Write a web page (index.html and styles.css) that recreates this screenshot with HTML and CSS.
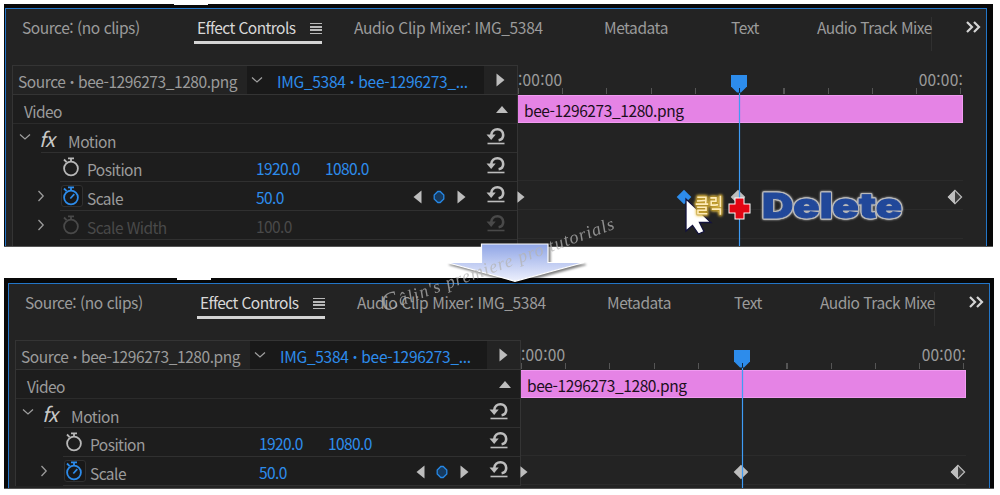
FILE: index.html
```html
<!DOCTYPE html>
<html lang="ko">
<head>
  <meta charset="UTF-8" />
  <title>Effect Controls - Delete Keyframe</title>
  <link rel="stylesheet" href="styles.css">
</head>
<body>
  <svg class="defs" width="0" height="0">
    <symbol id="watch" viewBox="0 0 18 20">
      <circle cx="9" cy="11.5" r="6.9" fill="none" stroke="currentColor" stroke-width="1.8"/>
      <path d="M6 1.3h6M9 1.5v3M2 2.5l2.6 2.6" fill="none" stroke="currentColor" stroke-width="1.8"/>
    </symbol>
    <symbol id="reset" viewBox="0 0 20 18">
      <path d="M5.2 8.3C5.7 0.4 17.2 0.2 17.2 8c0 2.8-1.6 4.7-4.6 5.2" fill="none" stroke="currentColor" stroke-width="2.6"/>
      <path d="M0.5 7.6h9.2L5.2 13z" fill="currentColor"/>
      <path d="M1.5 16.5h17" stroke="currentColor" stroke-width="1.6"/>
    </symbol>
    <symbol id="down" viewBox="0 0 12 8"><path d="M1 1.5l5 4.5 5-4.5" fill="none" stroke="currentColor" stroke-width="1.2"/></symbol>
    <symbol id="right" viewBox="0 0 8 12"><path d="M1.5 1l4.7 5-4.7 5" fill="none" stroke="currentColor" stroke-width="1.3"/></symbol>
    <symbol id="play" viewBox="0 0 9 14"><path d="M0.5 0.5v13L8.5 7z" fill="currentColor"/></symbol>
    <symbol id="more" viewBox="0 0 15 12"><path d="M1 1l5 5-5 5M8 1l5 5-5 5" fill="none" stroke="currentColor" stroke-width="2.2"/></symbol>
    <symbol id="hex" viewBox="0 0 12 14"><path d="M4.8 1.5h2.4L10.8 5v4L7.2 12.5H4.8L1.2 9V5z" fill="#173a5e" stroke="#2688e6" stroke-width="1.3"/></symbol>
    <symbol id="marker" viewBox="0 0 16 18"><path d="M0 0h16v11.5L10 17.5H6L0 11.5z" fill="#2d8ceb"/><path d="M8.5 13v5" stroke="#102a44" stroke-width="1"/></symbol>
    <symbol id="key" viewBox="0 0 16 16"><path d="M8 0.7L15.3 8 8 15.3 0.7 8z" fill="currentColor"/></symbol>
    <symbol id="key-end" viewBox="0 0 16 16"><path d="M8 1.4L14.6 8 8 14.6 1.4 8z" fill="#3d3d3d" stroke="#bdbdbd" stroke-width="1.2"/><path d="M8 0.8V15.2L0.8 8z" fill="#bdbdbd"/></symbol>
  </svg>

  <div class="page">
    <section class="shot first">
      <div class="notch"></div>
      <div class="panel">
        <div class="tabs">
          <span class="tab t-source">Source: (no clips)</span>
          <span class="tab t-effect active"><span class="label">Effect Controls</span><i class="menu"></i></span>
          <span class="tab t-mixer">Audio Clip Mixer: IMG_5384</span>
          <span class="tab t-meta">Metadata</span>
          <span class="tab t-text">Text</span>
          <span class="tab t-track">Audio Track Mixe</span>
          <svg class="more"><use href="#more"/></svg>
        </div>
        <div class="main">
          <div class="effects">
            <div class="clip-row">
              <span class="source">Source <b>·</b> bee-1296273_1280.png</span>
              <span class="sequence"><svg class="down"><use href="#down"/></svg><span class="seq-name">IMG_5384 <b>·</b> bee-1296273_...</span></span>
              <span class="go"><svg class="play"><use href="#play"/></svg></span>
            </div>
            <div class="video-row"><span>Video</span><i class="up"></i></div>
            <div class="row motion">
              <svg class="down"><use href="#down"/></svg><span class="fx">fx</span><span class="name">Motion</span>
              <svg class="reset"><use href="#reset"/></svg>
            </div>
            <div class="row">
              <span class="twirl"></span>
              <span class="watch"><svg><use href="#watch"/></svg></span>
              <span class="name">Position</span><span class="value">1920.0</span><span class="value">1080.0</span>
              <svg class="reset"><use href="#reset"/></svg>
            </div>
            <div class="row">
              <span class="twirl"><svg><use href="#right"/></svg></span>
              <span class="watch on"><svg><use href="#watch"/><path d="M8.3 12.5l4-4.3" stroke="currentColor" stroke-width="1.7"/></svg></span>
              <span class="name">Scale</span><span class="value">50.0</span>
              <span class="keys"><svg class="play prev"><use href="#play"/></svg><svg class="hex"><use href="#hex"/></svg><svg class="play"><use href="#play"/></svg></span>
              <svg class="reset"><use href="#reset"/></svg>
            </div>
            <div class="row disabled">
              <span class="twirl"><svg><use href="#right"/></svg></span>
              <span class="watch"><svg><use href="#watch"/></svg></span>
              <span class="name">Scale Width</span><span class="value">100.0</span>
              <svg class="reset"><use href="#reset"/></svg>
            </div>
            <div class="row"></div>
          </div>
          <div class="timeline">
            <div class="ruler"><span>:00:00</span><span>00:00:</span></div>
            <div class="clip">bee-1296273_1280.png</div>
            <div class="track tall"></div>
            <div class="track"></div>
            <div class="track"></div>
            <svg class="marker"><use href="#marker"/></svg>
            <svg class="key start"><use href="#play"/></svg>
            <svg class="key selected"><use href="#key"/></svg>
            <svg class="key middle"><use href="#key"/></svg>
            <svg class="key end"><use href="#key-end"/></svg>
            <i class="playline"></i>
          </div>
        </div>
      </div>
    </section>

    <section class="shot second">
      <div class="notch"></div>
      <div class="panel">
        <div class="tabs">
          <span class="tab t-source">Source: (no clips)</span>
          <span class="tab t-effect active"><span class="label">Effect Controls</span><i class="menu"></i></span>
          <span class="tab t-mixer">Audio Clip Mixer: IMG_5384</span>
          <span class="tab t-meta">Metadata</span>
          <span class="tab t-text">Text</span>
          <span class="tab t-track">Audio Track Mixe</span>
          <svg class="more"><use href="#more"/></svg>
        </div>
        <div class="main">
          <div class="effects">
            <div class="clip-row">
              <span class="source">Source <b>·</b> bee-1296273_1280.png</span>
              <span class="sequence"><svg class="down"><use href="#down"/></svg><span class="seq-name">IMG_5384 <b>·</b> bee-1296273_...</span></span>
              <span class="go"><svg class="play"><use href="#play"/></svg></span>
            </div>
            <div class="video-row"><span>Video</span><i class="up"></i></div>
            <div class="row motion">
              <svg class="down"><use href="#down"/></svg><span class="fx">fx</span><span class="name">Motion</span>
              <svg class="reset"><use href="#reset"/></svg>
            </div>
            <div class="row">
              <span class="twirl"></span>
              <span class="watch"><svg><use href="#watch"/></svg></span>
              <span class="name">Position</span><span class="value">1920.0</span><span class="value">1080.0</span>
              <svg class="reset"><use href="#reset"/></svg>
            </div>
            <div class="row">
              <span class="twirl"><svg><use href="#right"/></svg></span>
              <span class="watch on"><svg><use href="#watch"/><path d="M8.3 12.5l4-4.3" stroke="currentColor" stroke-width="1.7"/></svg></span>
              <span class="name">Scale</span><span class="value">50.0</span>
              <span class="keys"><svg class="play prev"><use href="#play"/></svg><svg class="hex"><use href="#hex"/></svg><svg class="play"><use href="#play"/></svg></span>
              <svg class="reset"><use href="#reset"/></svg>
            </div>
          </div>
          <div class="timeline">
            <div class="ruler"><span>:00:00</span><span>00:00:</span></div>
            <div class="clip">bee-1296273_1280.png</div>
            <div class="track tall"></div>
            <div class="track"></div>
            <svg class="marker"><use href="#marker"/></svg>
            <svg class="key start"><use href="#play"/></svg>
            <svg class="key middle"><use href="#key"/></svg>
            <svg class="key end"><use href="#key-end"/></svg>
            <i class="playline"></i>
          </div>
        </div>
      </div>
    </section>

    <!-- annotations over both panels -->
    <svg class="notes" viewBox="0 0 1000 495">
      <defs>
        <linearGradient id="arrow-fill" x1="0" y1="0" x2="0" y2="1">
          <stop offset="0" stop-color="#8fa5e6"/>
          <stop offset="1" stop-color="#edf0fd"/>
        </linearGradient>
      </defs>
      <path class="arrow" d="M481.5 244H548V262.5H584L515 281.3 447 262.5H481.5z"/>
      <text class="watermark" transform="translate(384 312) rotate(-19.8)" textLength="246"><tspan class="initial">C</tspan>âlin's premiere pro tutorials</text>
      <path class="cursor" d="M686 199V231L692.5 225.5 698.5 234 704 231.5 699.5 222.5H711z"/>
      <text class="click" x="695" y="213" textLength="28" lengthAdjust="spacingAndGlyphs">클릭</text>
      <path class="plus" d="M735.5 198.5h8v6h6v8h-6v6h-8v-6h-6v-8h6z"/>
      <text class="delete" x="762" y="218" textLength="140" lengthAdjust="spacingAndGlyphs">Delete</text>
    </svg>
  </div>
</body>
</html>
```
FILE: styles.css
```css
body {
  margin: 0;
  background: #fff;
  color: #9b9b9b;
  font-family: "Noto Sans CJK KR", "Noto Sans", sans-serif;
  font-size: 15.5px;
  letter-spacing: -0.45px;
  line-height: 20px;
}

.defs {
  position: absolute;
}

.page {
  display: flow-root;
  position: relative;
  width: 1000px;
  height: 495px;
  overflow: hidden;
}

.page, .page * {
  box-sizing: border-box;
}

svg {
  flex: none;
  display: block;
}

.shot {
  position: relative;
  width: 989px;
  height: 243px;
  margin-left: 4px;
  padding: 4px 0 0 1px;
  background: #080808;
  border-bottom: 1px solid #555;
  overflow: hidden;
}

.first {
  margin-top: 4px;
}

.second {
  width: 990px;
  height: 211px;
  margin-top: 31px;
  padding: 5px 0 0 4px;
}

.notch {
  position: absolute;
  top: 0;
  left: 170px;
  width: 34px;
  height: 1px;
  background: #fff;
}

.second .notch {
  left: 173px;
  height: 2px;
}

.panel {
  width: 982px;
  height: 260px;
  border: 1px solid #2376c8;
  background: #232323;
}

/* tabs */
.tabs {
  display: flex;
  height: 56px;
  padding: 8px 0 0 16px;
  white-space: nowrap;
}

.tab {
  flex: none;
  height: 27px;
}

.t-source { width: 172px; }
.t-effect { width: 128px; margin-right: 32px; letter-spacing: -0.57px; }
.t-mixer { width: 250px; letter-spacing: -0.33px; }
.t-meta { width: 127px; }
.t-text { width: 86px; }

.t-track {
  width: 115px;
  height: 34px;
  letter-spacing: -0.5px;
  border-right: 1px solid #303030;
}

.active {
  display: flex;
  justify-content: space-between;
  padding-left: 3px;
  color: #d8d8d8;
  border-bottom: 3px solid #d4d4d4;
}

.menu {
  width: 12px;
  height: 11px;
  margin: 6px 0 0;
  background: repeating-linear-gradient(#b8b8b8 0 1.4px, transparent 1.4px 3.2px);
}

.more {
  width: 15px;
  height: 12px;
  margin: 4px 0 0 34px;
  color: #d4d4d4;
}

/* effect list */
.main {
  display: flex;
  padding-left: 6px;
}

.effects {
  width: 506px;
  border: 1px solid #343434;
  border-bottom: 0;
  background: #1d1d1d;
}

.clip-row {
  display: flex;
  height: 29px;
  border-bottom: 1px solid #343434;
  letter-spacing: -0.3px;
  white-space: nowrap;
}

.source {
  width: 234px;
  padding: 5px 0 0 5px;
  letter-spacing: -0.42px;
  background: #232323;
}

.sequence {
  display: flex;
  width: 237px;
  padding: 5px 0 0 4px;
  background: #191919;
  color: #2d8ceb;
}

.down {
  width: 12px;
  height: 8px;
  color: #a0a0a0;
}

.sequence .down {
  margin: 5px 14px 0 0;
}

.go {
  flex: 1;
  padding: 7px 0 0 12px;
  background: #232323;
  color: #bdbdbd;
}

.play {
  width: 9px;
  height: 14px;
}

.video-row {
  display: flex;
  justify-content: space-between;
  height: 29px;
  padding: 6px 9px 0 11px;
  border-bottom: 1px solid #2b2b2b;
  letter-spacing: -0.6px;
}

.up {
  width: 0;
  height: 0;
  margin-top: 5px;
  border: 6px solid transparent;
  border-top: 0;
  border-bottom: 7px solid #bdbdbd;
}

.row {
  display: flex;
  height: 29px;
  padding-left: 24px;
  background: linear-gradient(#303030, #303030) 47px 28px / 100% 1px no-repeat;
}

.motion {
  padding-left: 6px;
  background-position: 28px 28px;
}

.motion .down {
  margin-top: 9px;
}

.fx {
  width: 29px;
  margin: 5px 0 0 8px;
  color: #c8c8c8;
  font-size: 20px;
  font-style: italic;
}

.name {
  padding-top: 7px;
}

.row:not(.motion) .name {
  width: 169px;
  padding-top: 6px;
  letter-spacing: -0.55px;
}

.twirl {
  width: 24px;
  padding-top: 8px;
}

.twirl svg {
  width: 8px;
  height: 12px;
}

.watch {
  width: 22px;
  height: 22px;
  padding: 1px;
  margin: 3px 4px 0 0;
  color: #b8b8b8;
}

.watch svg {
  width: 18px;
  height: 20px;
}

.on {
  border: 1px solid #303030;
  border-radius: 3px;
  padding: 0;
  color: #2d8ceb;
  background: #181818;
}

.value {
  width: 69px;
  padding-top: 5px;
  color: #2d8ceb;
  letter-spacing: -0.6px;
}

.keys {
  display: flex;
  align-items: center;
  justify-content: space-between;
  width: 53px;
  margin: 7px 0 0 88px;
  height: 16px;
  color: #bdbdbd;
}

.prev {
  transform: scaleX(-1);
}

.hex {
  width: 12px;
  height: 14px;
  margin-right: 2px;
}

.reset {
  width: 20px;
  height: 18px;
  margin: 3px 11px 0 auto;
  color: #bdbdbd;
}

.disabled, .disabled .value, .disabled .reset, .disabled .watch {
  color: #494949;
}

.disabled .twirl {
  color: #9b9b9b;
}

/* timeline */
.timeline {
  position: relative;
  width: 445px;
}

.ruler {
  display: flex;
  justify-content: space-between;
  height: 30px;
  padding-top: 4px;
  letter-spacing: 0.2px;
  background: repeating-linear-gradient(90deg, #555 0 1px, transparent 1px 44.25px) 0 23px / 100% 6px no-repeat;
}

.clip {
  height: 28px;
  padding: 4px 0 0 6px;
  border: 1px solid #f19bf1;
  border-left-width: 0;
  background: #e583e5;
  color: #1c0f1c;
  letter-spacing: -0.4px;
}

.track {
  height: 29px;
  border-bottom: 1px solid #2b2b2b;
}

.tall {
  height: 58px;
}

.playline {
  position: absolute;
  top: 28px;
  left: 221px;
  width: 1px;
  height: 200px;
  background: #3f9cf5;
  box-shadow: 0 0 1px #2d8ceb;
}

.marker {
  position: absolute;
  top: 10px;
  left: 213px;
  width: 16px;
  height: 18px;
}

.key {
  position: absolute;
  top: 124px;
  width: 16px;
  height: 16px;
  color: #bdbdbd;
}

.start {
  left: -1px;
  top: 125px;
  width: 8px;
  height: 14px;
}

.selected {
  left: 158px;
  color: #2d8ceb;
}

.middle { left: 212px; }
.end { left: 429px; }

/* annotations */
.notes {
  position: absolute;
  inset: 0;
  width: 1000px;
  height: 495px;
  letter-spacing: 0;
}

.arrow {
  fill: url(#arrow-fill);
  stroke: #fff;
  stroke-width: 1.2;
  filter: drop-shadow(2px 2px 1px rgba(0, 0, 0, .5));
}

.watermark {
  font-family: "Liberation Serif", serif;
  font-size: 18px;
  font-style: italic;
  fill: #b4b4b4;
  opacity: .75;
}

.initial {
  font-size: 25px;
}

.cursor {
  fill: #fff;
  stroke: #12123c;
  stroke-width: 1.3;
}

.click {
  font-size: 20px;
  font-weight: 500;
  fill: #ffecb8;
  stroke: #8a6b1099;
  stroke-width: 1.5px;
  paint-order: stroke;
  filter: drop-shadow(0 0 1.5px #f0cb50) drop-shadow(0 0 1px #e5b93c);
}

.plus {
  fill: #e30613;
  stroke: #fff;
  stroke-width: 2px;
  paint-order: stroke;
}

/* heavy blue letters, light rim built from shadows */
.delete {
  font-family: Inter, "Noto Sans", sans-serif;
  font-size: 34px;
  font-weight: 900;
  fill: #21489a;
  stroke: #21489a;
  stroke-width: 0.8px;
  filter: drop-shadow(1px 0 0 #b9b9b9) drop-shadow(-1px 0 0 #b9b9b9) drop-shadow(0 1px 0 #b9b9b9) drop-shadow(0 -1px 0 #b9b9b9) drop-shadow(0 0 1px #aaa);
}
```
